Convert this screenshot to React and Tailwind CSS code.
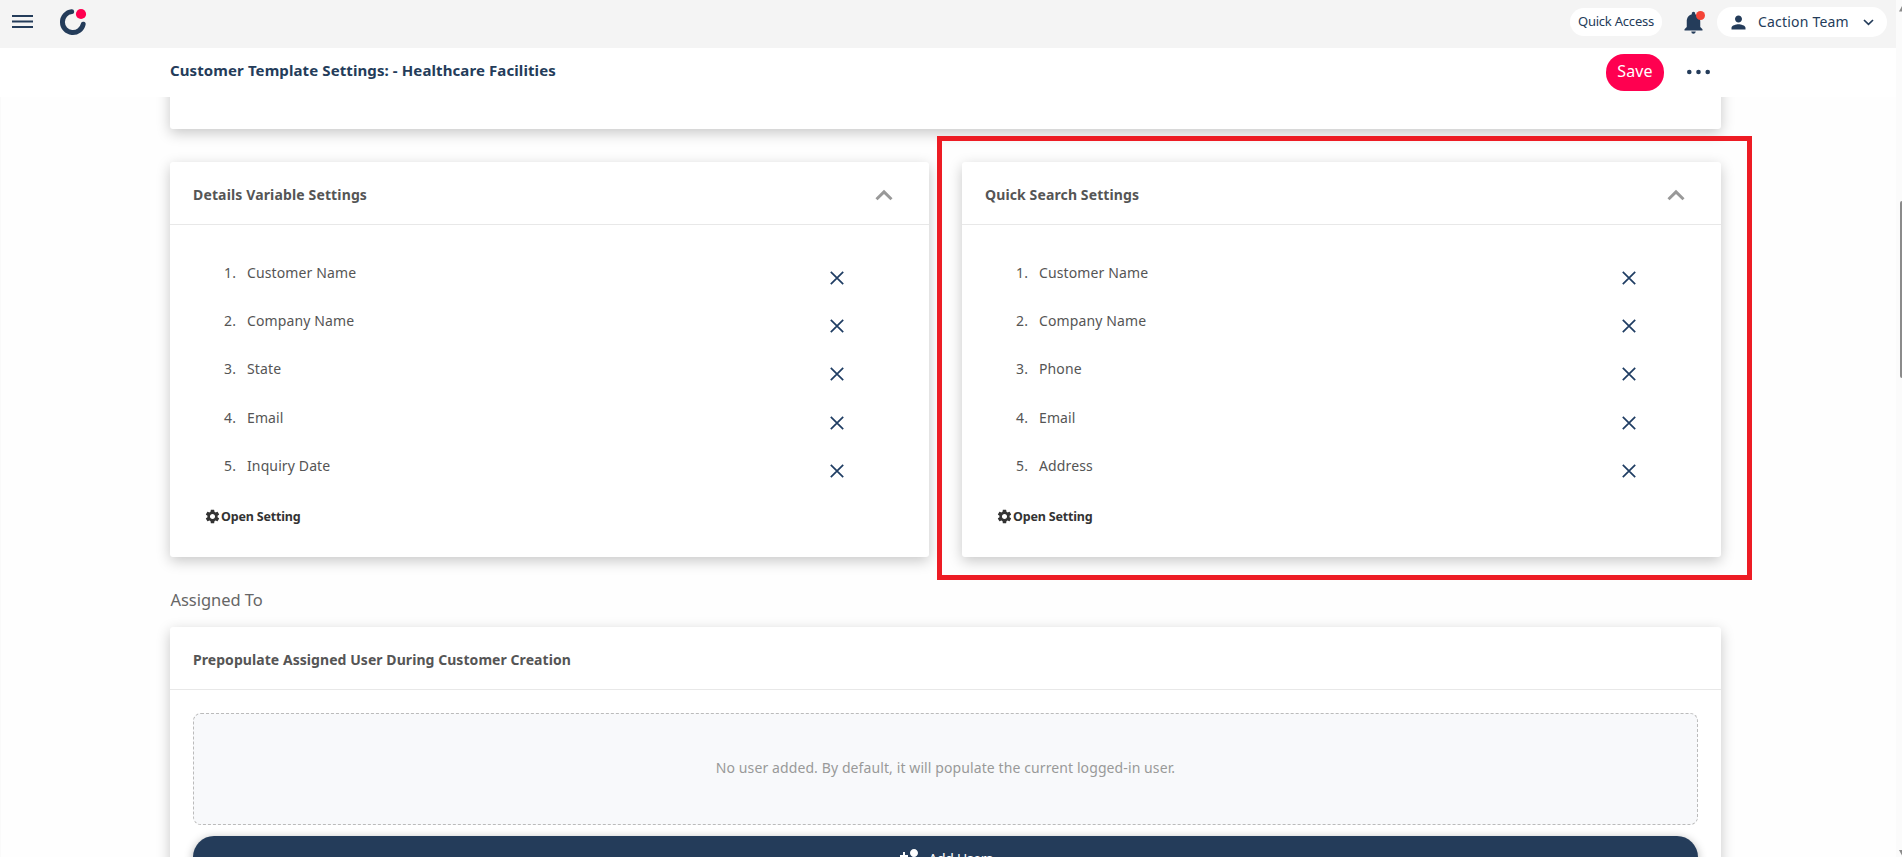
import React from "react";
import { MdPersonAdd, MdPerson, MdNotifications, MdSettings } from "react-icons/md";

const detailFields = ["Customer Name", "Company Name", "State", "Email", "Inquiry Date"];
const searchFields = ["Customer Name", "Company Name", "Phone", "Email", "Address"];

const cardClass = "bg-white rounded-[3px] shadow-[0_4px_14px_rgba(0,0,0,0.22)]";

function Logo() {
  return (
    <svg width="30" height="30" viewBox="0 0 30 30" className="ml-[25px]">
      <path
        d="M13.700 4.600A10.500 10.500 0 1 0 25.200 17.200"
        fill="none"
        stroke="#243c5a"
        strokeWidth="4.900"
        strokeLinecap="round"
      />
      <circle cx="23" cy="7" r="6.200" fill="#f4f4f4" />
      <circle cx="23" cy="7" r="5.100" fill="#ff0050" />
    </svg>
  );
}

function TopBar() {
  return (
    <header className="flex h-12 shrink-0 items-center bg-[#f4f4f4] pl-3 pr-[9px] text-[#243c5a]">
      <svg width="21" height="14" viewBox="0 0 21 14" className="mt-[-4px]">
        <path d="M0 1h21M0 6.500h21M0 12h21" stroke="#243c5a" strokeWidth="2" />
      </svg>
      <div className="-mt-1">
        <Logo />
      </div>
      <div className="ml-auto mb-1 flex items-center">
        <div className="flex h-7 w-[92px] items-center justify-center rounded-full bg-white pb-[1px] text-[13px] tracking-[-0.22px]">
          Quick Access
        </div>
        <div className="relative ml-[18px] h-7 w-7">
          <MdNotifications size={27} className="relative top-[1px]" />
          <span className="absolute left-[16px] top-[3px] h-[9px] w-[9px] rounded-full bg-[#f44336]" />
        </div>
        <div className="ml-[9px] flex h-[30px] w-[170px] items-center rounded-full bg-white">
          <MdPerson size={21} className="ml-[11px]" />
          <span className="ml-[9px] pb-[1px] text-sm tracking-[0.2px]">Caction Team</span>
          <svg width="11" height="7" viewBox="0 0 11 7" className="ml-[14px]">
            <path d="M1 1l4.500 4.300L10 1" fill="none" stroke="#243c5a" strokeWidth="1.700" />
          </svg>
        </div>
      </div>
    </header>
  );
}

function TitleBar() {
  return (
    <div className="flex h-[49px] shrink-0 items-center bg-white pl-[170px] pr-[185px]">
      <h1 className="pb-[5px] text-[15px] font-bold tracking-[0.1px] text-[#243c5a]">
        Customer Template Settings: - Healthcare Facilities
      </h1>
      <button className="ml-auto flex h-[37px] w-[58px] items-center justify-center rounded-[18px] bg-[#ff0050] pb-[3px] text-base tracking-[0.1px] text-white">
        Save
      </button>
      <svg width="25" height="6" viewBox="0 0 25 6" className="ml-[22px] -mt-[2px]">
        <g fill="#243c5a">
          <circle cx="3.300" cy="3" r="2.300" />
          <circle cx="12.500" cy="3" r="2.300" />
          <circle cx="21.700" cy="3" r="2.300" />
        </g>
      </svg>
    </div>
  );
}

function CardHeader({ title, track, collapsible }) {
  return (
    <div className="flex h-[63px] items-center justify-between border-b border-[#e8e8e8] pl-[23px] pr-[36px]">
      <h2 className={"pt-[3px] text-sm font-bold text-[#555] " + track}>{title}</h2>
      {collapsible && (
        <svg width="18" height="12" viewBox="0 0 18 12" className="mt-[4px]">
          <path d="M1.500 10.200L9 2.900l7.500 7.300" fill="none" stroke="#999" strokeWidth="3" />
        </svg>
      )}
    </div>
  );
}

function FieldCard({ title, track, fields }) {
  return (
    <section className={"h-[395px] w-[759px] " + cardClass}>
      <CardHeader title={title} track={track} collapsible />
      <ol className="pt-[23.500px]">
        {fields.map((name, i) => (
          <li key={name} className="flex h-[48.300px] items-center pl-[53px] text-sm text-[#555]">
            <span className="w-[13px] text-right tracking-[0.1px]">{i + 1}.</span>
            <span className="ml-[11px] tracking-[0.12px]">{name}</span>
            <svg width="14" height="14" viewBox="0 0 14 14" className="ml-auto mr-[85px] mt-[10px]">
              <path d="M.8.8l12.400 12.400M13.200.8L.8 13.200" stroke="#1f3d63" strokeWidth="1.700" />
            </svg>
          </li>
        ))}
      </ol>
      <div className="flex h-[53px] items-center pl-[33.500px] text-[#333]">
        <MdSettings size={17} />
        <span className="ml-[0.500px] mt-[1px] text-[12.500px] font-bold tracking-[-0.18px]">Open Setting</span>
      </div>
    </section>
  );
}

export default function App() {
  return (
    <div className="relative flex h-[857px] w-[1902px] overflow-hidden bg-[#fefefe] font-['Noto_Sans',sans-serif]">
      <div className="flex w-[1896px] flex-col">
        <TopBar />
        <TitleBar />
        <main className="h-[760px] overflow-hidden border-l border-[#fafafa] pl-[169px]">
          <div className={"-mt-5 h-[52px] w-[1551px] " + cardClass} />
          <div className="mt-[33px] flex w-[1551px] justify-between">
            <FieldCard title="Details Variable Settings" track="tracking-[0.14px]" fields={detailFields} />
            <FieldCard title="Quick Search Settings" track="tracking-[0.12px]" fields={searchFields} />
          </div>
          <h3 className="flex h-[70px] items-center pl-[0.500px] pt-[16px] text-[16.500px] tracking-[-0.05px] text-[#666]">
            Assigned To
          </h3>
          <section className={"h-[300px] w-[1551px] " + cardClass}>
            <CardHeader title="Prepopulate Assigned User During Customer Creation" track="tracking-[0.06px]" />
            <div className="px-[23px] pt-[23px]">
              <div className="flex h-[112px] items-center justify-center rounded-lg border border-dashed border-[#bbb] bg-[#f8f9fb] pb-[2px] text-sm tracking-[0.1px] text-[#999]">
                No user added. By default, it will populate the current logged-in user.
              </div>
              <button className="mt-[11px] flex h-[42px] w-full items-center justify-center rounded-full bg-[#243c5a] text-sm tracking-[-0.35px] text-white shadow-[0_2px_10px_rgba(0,0,0,0.3)]">
                <MdPersonAdd size={24} />
                <span className="ml-[6px] mt-[3px]">Add Users</span>
              </button>
            </div>
          </section>
        </main>
      </div>
      <div className="flex w-[6px] flex-col items-end bg-[#fbfbfb]">
        <svg width="3" height="6" viewBox="0 0 3 6" className="mt-[6px]">
          <path d="M3 0v5.500H0z" fill="#8b8b8b" />
        </svg>
        <div className="mt-[189px] h-[177px] w-[2px] rounded-l-sm bg-[#8b8b8b]" />
        <svg width="3" height="6" viewBox="0 0 3 6" className="mt-auto mb-[1px]">
          <path d="M3 5.500V0H0z" fill="#8b8b8b" />
        </svg>
      </div>
      <div className="pointer-events-none absolute left-[937px] top-[136px] h-[444px] w-[815px] border-[5px] border-[#ed1c24]" />
    </div>
  );
}
